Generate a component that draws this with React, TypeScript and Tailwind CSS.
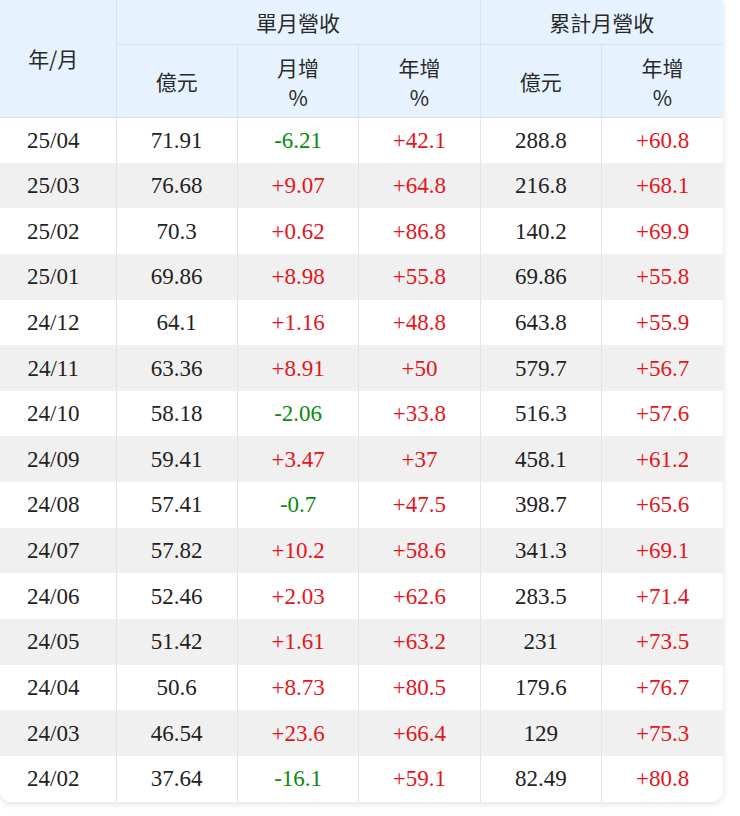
import React from 'react';

type Row = [string, string, string, string, string, string];

const rows: Row[] = [
  ['25/04', '71.91', '-6.21', '+42.1', '288.8', '+60.8'],
  ['25/03', '76.68', '+9.07', '+64.8', '216.8', '+68.1'],
  ['25/02', '70.3', '+0.62', '+86.8', '140.2', '+69.9'],
  ['25/01', '69.86', '+8.98', '+55.8', '69.86', '+55.8'],
  ['24/12', '64.1', '+1.16', '+48.8', '643.8', '+55.9'],
  ['24/11', '63.36', '+8.91', '+50', '579.7', '+56.7'],
  ['24/10', '58.18', '-2.06', '+33.8', '516.3', '+57.6'],
  ['24/09', '59.41', '+3.47', '+37', '458.1', '+61.2'],
  ['24/08', '57.41', '-0.7', '+47.5', '398.7', '+65.6'],
  ['24/07', '57.82', '+10.2', '+58.6', '341.3', '+69.1'],
  ['24/06', '52.46', '+2.03', '+62.6', '283.5', '+71.4'],
  ['24/05', '51.42', '+1.61', '+63.2', '231', '+73.5'],
  ['24/04', '50.6', '+8.73', '+80.5', '179.6', '+76.7'],
  ['24/03', '46.54', '+23.6', '+66.4', '129', '+75.3'],
  ['24/02', '37.64', '-16.1', '+59.1', '82.49', '+80.8'],
];

const sans = "font-['Noto_Sans_CJK_TC','Noto_Sans',sans-serif]";
const serif = "font-['Liberation_Serif','Noto_Sans_CJK_TC',serif]";

// 負值綠、正值紅
const tone = (v: string) =>
  v.startsWith('-') ? 'text-[#0b8a0b]' : v.startsWith('+') ? 'text-[#e5141c]' : 'text-[#222]';

function TwoLine({ top }: { top: string }) {
  return (
    <div className="flex flex-col items-center pt-[2px]">
      <span className="block leading-[30px]">{top}</span>
      <span className="block leading-[30px]">%</span>
    </div>
  );
}

export default function App() {
  const th = 'border border-[#d3e3f0] font-normal text-[#2a2a2a] text-[21px] leading-[30px]';
  return (
    <div className="w-[740px] h-[816px] bg-white">
      <div className="w-[723px] rounded-b-xl bg-white shadow-[0_2px_6px_rgba(0,0,0,0.12)] overflow-hidden">
        <table className="w-full table-fixed border-collapse">
          <colgroup>
            <col className="w-[116px]" />
            <col />
            <col />
            <col />
            <col />
            <col />
          </colgroup>
          <thead className={`bg-[#e6f2fd] ${sans}`}>
            <tr className="h-[44px]">
              <th rowSpan={2} className={`${th} border-l-0 border-t-0 pr-[9px]`}>年/月</th>
              <th colSpan={3} className={`${th} border-t-0`}>單月營收</th>
              <th colSpan={2} className={`${th} border-t-0 border-r-0`}>累計月營收</th>
            </tr>
            <tr className="h-[73px]">
              <th className={th}>億元</th>
              <th className={th}><TwoLine top="月增" /></th>
              <th className={th}><TwoLine top="年增" /></th>
              <th className={th}>億元</th>
              <th className={`${th} border-r-0`}><TwoLine top="年增" /></th>
            </tr>
          </thead>
          <tbody className={serif}>
            {rows.map((r, i) => (
              <tr key={r[0]} className={`h-[45.65px] ${i % 2 === 1 ? 'bg-[#f0f0f0]' : 'bg-white'}`}>
                {r.map((v, j) => (
                  <td
                    key={j}
                    className={`text-center text-[23px] leading-none border-x border-[#e4e4e4] ${j === 0 ? 'border-l-0 pr-[9px]' : ''} ${j === 5 ? 'border-r-0' : ''} ${j >= 2 && j !== 4 ? tone(v) : 'text-[#222]'}`}
                  >
                    {v}
                  </td>
                ))}
              </tr>
            ))}
          </tbody>
        </table>
      </div>
    </div>
  );
}
